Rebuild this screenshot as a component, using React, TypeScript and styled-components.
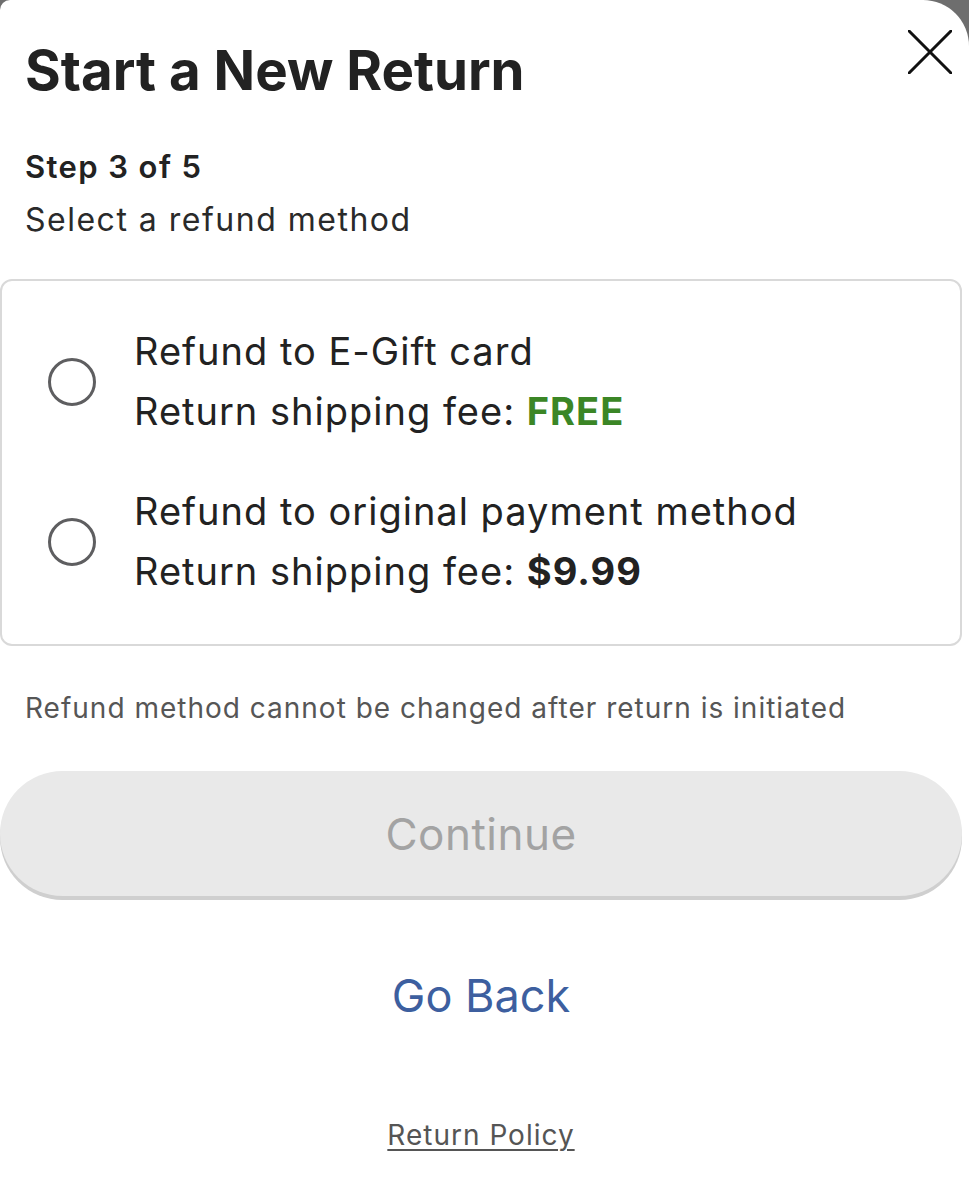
import React from "react";
import styled, { createGlobalStyle } from "styled-components";

const Global = createGlobalStyle`
  html, body { margin: 0; padding: 0; background: #6e6e6e; }
  body { font-family: Inter, "Noto Sans", "Liberation Sans", sans-serif; -webkit-font-smoothing: antialiased; }
  * { box-sizing: border-box; }
`;

const Modal = styled.div`
  background: #ffffff;
  min-height: 1200px;
  width: 969px;
  border-top-right-radius: 46px;
  border-top-left-radius: 10px;
  padding: 30px 7px 0 0;
  display: flex;
  flex-direction: column;
  color: #222222;
`;

const Header = styled.div`
  display: flex;
  justify-content: space-between;
  align-items: flex-start;
  padding-left: 25px;
`;

const Title = styled.h1`
  margin: 9px 0 0;
  font-size: 54.6px;
  line-height: 62px;
  font-weight: 700;
  letter-spacing: 0;
  color: #222222;
`;

const CloseButton = styled.button`
  border: 0;
  background: none;
  padding: 0;
  margin-right: 10px;
  width: 44px;
  height: 44px;
  display: flex;
  cursor: pointer;
`;

const StepLabel = styled.div`
  margin: 48px 0 0 25px;
  font-size: 31px;
  line-height: 36px;
  font-weight: 600;
  letter-spacing: 1.4px;
  color: #222222;
`;

const SubLabel = styled.div`
  margin: 16px 0 0 25px;
  font-size: 32px;
  line-height: 38px;
  font-weight: 400;
  letter-spacing: 1.5px;
  color: #2a2a2a;
`;

const Card = styled.div`
  margin-top: 40px;
  border: 2px solid #d9d9d9;
  border-radius: 12px;
  padding: 40px 20px 43px 46px;
  display: flex;
  flex-direction: column;
  gap: 40px;
`;

const Option = styled.label`
  display: flex;
  align-items: center;
  gap: 38px;
  cursor: pointer;
`;

const Radio = styled.span`
  width: 48px;
  height: 48px;
  border-radius: 50%;
  border: 3px solid #5e5e60;
  flex-shrink: 0;
  margin-top: 2px;
`;

const OptionText = styled.div`
  display: flex;
  flex-direction: column;
  font-size: 38px;
  line-height: 60px;
  letter-spacing: 1px;
  color: #222222;
`;

const Fee = styled.span<{ $tone: "free" | "paid" }>`
  font-weight: 700;
  color: ${(p) => (p.$tone === "free" ? "#3b8626" : "#222222")};
`;

const Note = styled.p`
  margin: 44px 0 0 25px;
  font-size: 28px;
  line-height: 36px;
  letter-spacing: 1px;
  color: #565656;
`;

const ContinueButton = styled.button`
  margin-top: 45px;
  height: 125px;
  width: 100%;
  border: 0;
  border-radius: 63px;
  background: #e9e9e9;
  box-shadow: 0 4px 0 #cfcfcf;
  font-family: inherit;
  font-size: 44px;
  letter-spacing: 0.5px;
  color: #a3a3a3;
  cursor: default;
`;

const LinkButton = styled.button`
  margin: 71px auto 0;
  border: 0;
  background: none;
  font-family: inherit;
  font-size: 45px;
  line-height: 56px;
  color: #3d5f9f;
  cursor: pointer;
`;

const PolicyLink = styled.a`
  margin: 92px auto 0;
  font-size: 28px;
  line-height: 36px;
  letter-spacing: 1px;
  color: #555555;
  text-decoration: underline;
  text-underline-offset: 4px;
  text-decoration-thickness: 2px;
`;

export default function App() {
  const options = [
    { title: "Refund to E-Gift card", fee: "FREE", tone: "free" as const },
    { title: "Refund to original payment method", fee: "$9.99", tone: "paid" as const },
  ];
  return (
    <>
      <Global />
      <Modal>
        <Header>
          <Title>Start a New Return</Title>
          <CloseButton aria-label="Close">
            <svg width="44" height="44" viewBox="0 0 44 44">
              <path d="M1 1 L43 43 M43 1 L1 43" stroke="#111" strokeWidth="3" strokeLinecap="round" />
            </svg>
          </CloseButton>
        </Header>
        <StepLabel>Step 3 of 5</StepLabel>
        <SubLabel>Select a refund method</SubLabel>
        <Card>
          {options.map((o) => (
            <Option key={o.title}>
              <Radio />
              <OptionText>
                <span>{o.title}</span>
                <span>
                  Return shipping fee: <Fee $tone={o.tone}>{o.fee}</Fee>
                </span>
              </OptionText>
            </Option>
          ))}
        </Card>
        <Note>Refund method cannot be changed after return is initiated</Note>
        <ContinueButton disabled>Continue</ContinueButton>
        <LinkButton>Go Back</LinkButton>
        <PolicyLink href="#">Return Policy</PolicyLink>
      </Modal>
    </>
  );
}
